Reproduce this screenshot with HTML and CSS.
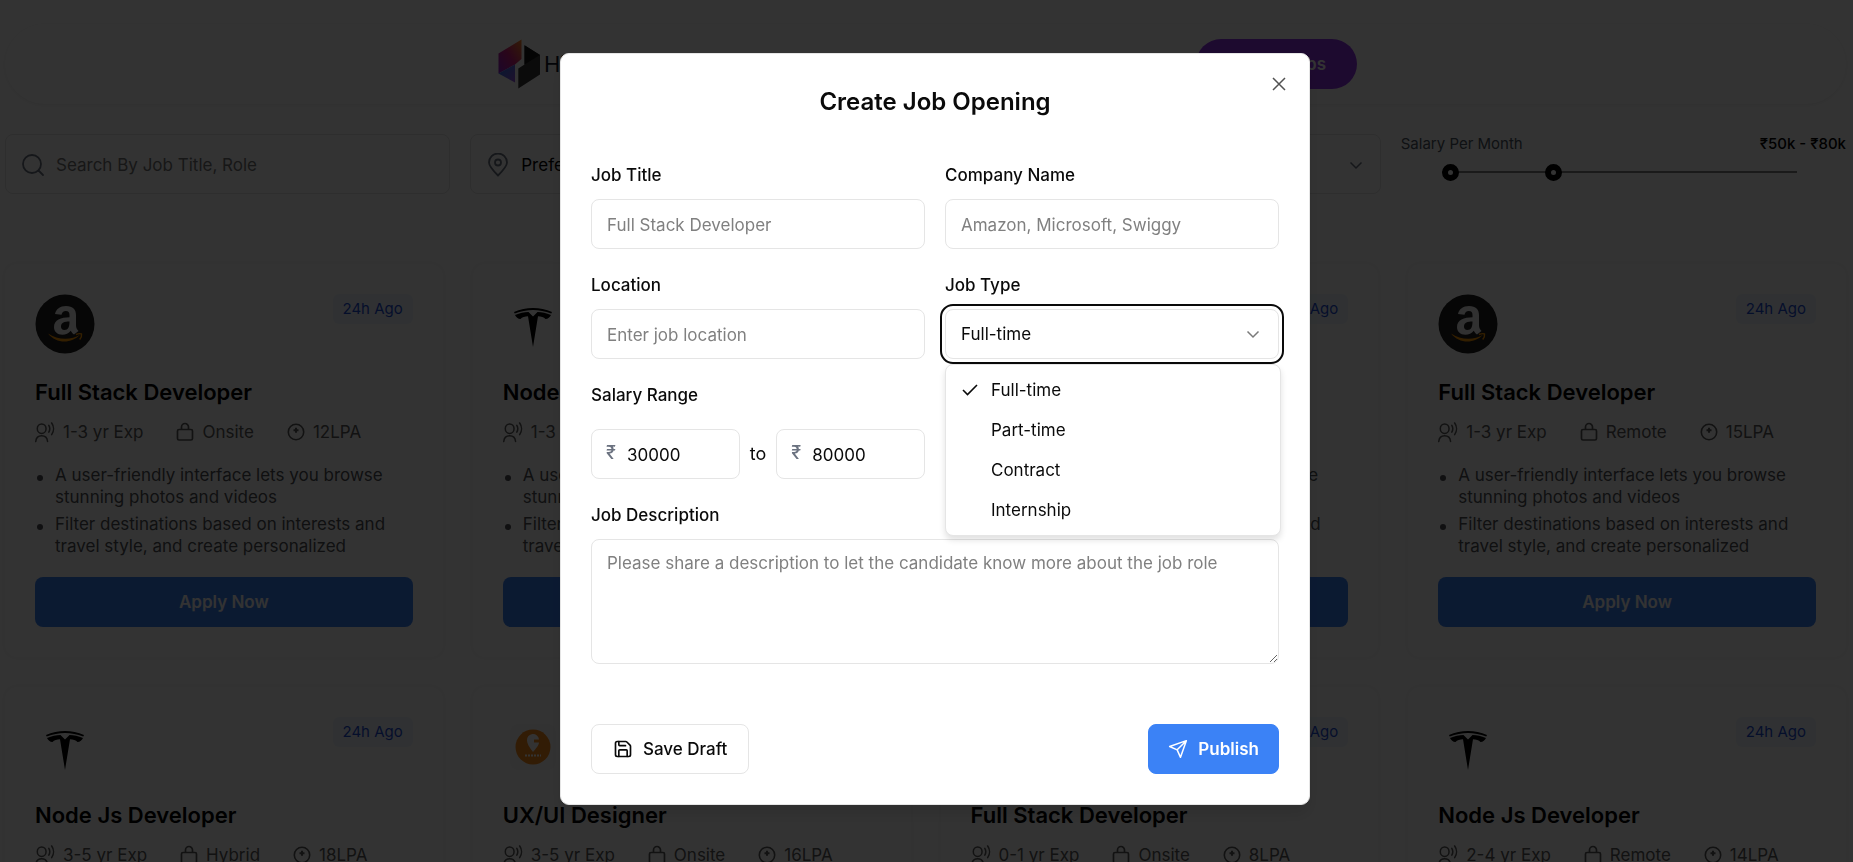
FILE: index.html
```html
<!DOCTYPE html>
<html lang="en">
<head>
<meta charset="utf-8">
<title>Job Openings</title>
<link rel="stylesheet" href="styles.css">
</head>
<body>
<svg class="sprite" aria-hidden="true">
  <symbol id="i-exp" viewBox="0 0 21 22"><g fill="none" stroke="currentColor" stroke-width="1.6" stroke-linecap="round"><ellipse cx="7" cy="7.500" rx="4.600" ry="5"/><path d="M.8 21c.4-4 3-6 6.200-6s5.800 2 6.200 6M14.500 4c1.200 2 1.200 5 0 7.200M17.500 1.500c2.600 3.600 2.600 8.600 0 12.200"/></g></symbol>
  <symbol id="i-lock" viewBox="0 0 18 20"><g fill="none" stroke="currentColor" stroke-width="1.700" stroke-linejoin="round"><rect x="1.500" y="7.500" width="15" height="10.500" rx="1.500"/><path d="M5.500 7.500V5a3.500 3.500 0 0 1 7 0v2.500"/></g></symbol>
  <symbol id="i-pay" viewBox="0 0 18 18"><g fill="none" stroke="currentColor" stroke-width="1.600"><circle cx="9" cy="9" r="7.700"/><path d="M9 4.800v5M6.500 7.200h5" stroke-width="2"/></g></symbol>
  <symbol id="i-down" viewBox="0 0 18 18"><path d="m3.500 6.500 5.500 5.500 5.500-5.500" fill="none" stroke="currentColor" stroke-width="1.500"/></symbol>
  <symbol id="i-amazon" viewBox="0 0 60 60"><circle cx="30" cy="30" r="29.500" fill="#1e1e1e"/><path d="M20 20c1-5 5-8 11-8 7 0 10 3.500 10 9v10c0 3 1 4 2.500 6L39 40.500c-1.500-1-2.500-2.300-3.200-3.700-2.300 2.600-4.800 4-8.500 4-5 0-8.300-3-8.300-7.700 0-7.600 7-9.600 15.500-9.900V21c0-2.700-1-4-3.700-4-2.500 0-3.800 1.500-4.300 3.700zM34.500 27.500c-5 0-8.500 1.200-8.500 5 0 2.200 1.200 3.500 3.300 3.500 4 0 5.200-3.500 5.200-8.500z" fill="#f2f2f2"/><path d="M13 39.500c9.500 6.600 23 7 32 1.300-8.500 9-23.500 9.500-32-1.300z" fill="#f90"/><path d="M41 40.500c2-.8 4.500-1 5.500-.5.300 1.500-.4 3.700-1.800 5.500" fill="none" stroke="#f90" stroke-width="1.500"/></symbol>
  <symbol id="i-tesla" viewBox="0 0 60 60"><path d="M11 18c12-5.500 26-5.500 38 0l-.7 1.600c-12-4.700-24.600-4.700-36.600 0zM12 21c5-2 9-3 13.500-3l4.500 4.500 4.500-4.500c4.500 0 8.500 1 13.500 3-1 2-3 4-5.500 4-1.500-2-4.500-2.800-7.500-2.800L30 53l-5-30.800c-3 0-6 .8-7.500 2.800-2.500 0-4.500-2-5.500-4z" fill="#000"/></symbol>
  <symbol id="i-swiggy" viewBox="0 0 60 60"><rect x="7" y="7" width="46" height="46" rx="8" fill="#fafafa"/><circle cx="30" cy="30" r="17.500" fill="#f98a1a"/><path d="M30 35c-4-5-6-8.500-6-11.500a6 6 0 0 1 12-1h-5v3h5c0 2.500-3 6-6 9.500z" fill="#fff"/><path d="M22 38.500h16" stroke="#fff" stroke-width="2" stroke-dasharray="2 1"/></symbol>
</svg>

<div class="page">
  <header class="topbar">
    <a class="brand" href="#">
      <svg width="44" height="50" viewBox="0 0 44 50" aria-hidden="true">
        <defs>
          <linearGradient id="g1" x1="0" y1="1" x2="1" y2="0"><stop offset="0" stop-color="#8a1fd0"/><stop offset=".5" stop-color="#d01f80"/><stop offset="1" stop-color="#ff8a1f"/></linearGradient>
          <linearGradient id="g2" x1="0" y1="0" x2="1" y2="1"><stop offset="0" stop-color="#1f80f0"/><stop offset="1" stop-color="#9a50e0"/></linearGradient>
        </defs>
        <path d="M1.500 14.500 24.500.5V20L18 25.500 1.500 34.500z" fill="url(#g1)"/>
        <path d="m1.500 34.500 16.500-9v18z" fill="url(#g2)"/>
        <path d="M27.500 6.300 43 16v19.500L21.300 49.500v-20l6.200-4z" fill="#3a3a3a"/>
        <path d="M27.500 6.300 43 16l-15.500 9.500z" fill="#161616"/>
      </svg>
      <span>HireHub</span>
    </a>
    <button class="create-btn" type="button">Create Jobs</button>
  </header>

  <section class="filters" aria-label="Filters">
    <label class="filter">
      <svg width="24" height="24" viewBox="0 0 24 24" fill="none" stroke="currentColor" stroke-width="1.800" stroke-linecap="round" aria-hidden="true"><circle cx="11" cy="11" r="9"/><path d="m17.500 17.500 4.500 4.500"/></svg>
      <input type="text" placeholder="Search By Job Title, Role" aria-label="Search By Job Title, Role">
    </label>
    <label class="filter">
      <svg width="24" height="24" viewBox="0 0 24 24" fill="none" stroke="currentColor" stroke-width="1.800" aria-hidden="true"><path d="M12 22.500C6 16.500 3 13 3 9.500a9 9 0 0 1 18 0c0 3.500-3 7-9 13z"/><circle cx="12" cy="9.500" r="3"/></svg>
      <select aria-label="Preferred Location"><option>Preferred Location</option></select>
      <svg width="18" height="18" aria-hidden="true"><use href="#i-down"/></svg>
    </label>
    <label class="filter">
      <svg width="24" height="24" viewBox="0 0 18 20" aria-hidden="true"><use href="#i-exp"/></svg>
      <select aria-label="Job type"><option>Job type</option></select>
      <svg width="18" height="18" aria-hidden="true"><use href="#i-down"/></svg>
    </label>
    <div class="salary">
      <div class="salary-head"><span>Salary Per Month</span><strong>₹50k - ₹80k</strong></div>
      <div class="slider">
        <input type="range" min="50" max="148" value="50" aria-label="Minimum salary">
        <input type="range" min="50" max="148" value="80" aria-label="Maximum salary">
      </div>
    </div>
  </section>

  <main class="jobs" id="jobs"></main>
</div>

<div class="overlay">
  <form class="modal" role="dialog" aria-labelledby="modal-title">
    <button class="close" type="button" aria-label="Close"><svg width="18" height="18" viewBox="0 0 18 18" aria-hidden="true"><path d="m3 3 12 12M15 3 3 15" stroke="currentColor" stroke-width="1.500"/></svg></button>
    <h2 id="modal-title">Create Job Opening</h2>
    <div class="fields">
      <div class="field"><label for="title">Job Title</label><input id="title" type="text" placeholder="Full Stack Developer"></div>
      <div class="field"><label for="company">Company Name</label><input id="company" type="text" placeholder="Amazon, Microsoft, Swiggy"></div>
      <div class="field"><label for="location">Location</label><input id="location" type="text" placeholder="Enter job location"></div>
      <div class="field">
        <label for="type">Job Type</label>
        <div class="picker">
          <select id="type"><option>Full-time</option><option>Part-time</option><option>Contract</option><option>Internship</option></select>
          <svg class="picker-arrow" width="18" height="18" aria-hidden="true"><use href="#i-down"/></svg>
          <ul class="menu" role="listbox" aria-label="Job Type">
            <li role="option" aria-selected="true"><svg width="18" height="18" viewBox="0 0 18 18" aria-hidden="true"><path d="m2 9 4.500 4.500L16 4" fill="none" stroke="currentColor" stroke-width="1.600"/></svg>Full-time</li>
            <li role="option">Part-time</li>
            <li role="option">Contract</li>
            <li role="option">Internship</li>
          </ul>
        </div>
      </div>
      <div class="field">
        <label for="min">Salary Range</label>
        <div class="range">
          <div class="money"><span>₹</span><input id="min" type="text" value="30000"></div>
          <span class="to">to</span>
          <div class="money"><span>₹</span><input type="text" value="80000" aria-label="Maximum salary"></div>
        </div>
      </div>
      <div class="field wide"><label for="desc">Job Description</label><textarea id="desc" placeholder="Please share a description to let the candidate know more about the job role"></textarea></div>
    </div>
    <div class="actions">
      <button class="btn" type="button"><svg width="20" height="20" viewBox="0 0 24 24" fill="none" stroke="currentColor" stroke-width="2" stroke-linecap="round" stroke-linejoin="round" aria-hidden="true"><path d="M15.200 3a2 2 0 0 1 1.400.6l3.800 3.800a2 2 0 0 1 .6 1.400V19a2 2 0 0 1-2 2H5a2 2 0 0 1-2-2V5a2 2 0 0 1 2-2z"/><path d="M17 21v-7a1 1 0 0 0-1-1H8a1 1 0 0 0-1 1v7M7 3v4a1 1 0 0 0 1 1h7"/></svg>Save Draft</button>
      <button class="btn primary" type="submit"><svg width="20" height="20" viewBox="0 0 24 24" fill="none" stroke="currentColor" stroke-width="1.800" stroke-linejoin="round" aria-hidden="true"><path d="M22 2 2 9l9 4 4 9zM22 2 11 13"/></svg>Publish</button>
    </div>
  </form>
</div>
<script src="jobs.js"></script>
</body>
</html>
```
FILE: styles.css
```css
* { box-sizing: border-box; }

body {
  margin: 0;
  height: 100vh;
  overflow: hidden;
  background: #fff;
  color: #0a0a0a;
  font: 17px/22px Inter, "Liberation Sans", sans-serif;
}

button, input, select, textarea { font: inherit; color: inherit; }
h2, h3, ul { margin: 0; padding: 0; }
ul { list-style: none; }
svg { flex: none; }
.sprite { position: absolute; width: 0; height: 0; }

.page { padding: 24px 7px 0 5px; }

.topbar {
  display: flex;
  align-items: center;
  justify-content: space-between;
  height: 80px;
  padding: 0 489px 0 492px;
  border-radius: 40px;
  box-shadow: 0 1px 4px rgba(0, 0, 0, 0.08);
}
.brand {
  display: flex;
  align-items: center;
  gap: 3px;
  color: #0f172a;
  font-size: 22px;
  text-decoration: none;
}
.create-btn {
  height: 50px;
  padding: 0 31px;
  border: 0;
  border-radius: 25px;
  background: #9333ea;
  color: #fff;
  font-weight: 600;
}

.filters {
  display: grid;
  grid-template-columns: repeat(4, 1fr);
  gap: 20px;
  margin-top: 30px;
}
.filter {
  display: flex;
  align-items: center;
  gap: 11px;
  height: 60px;
  padding: 1px 15px 0;
  border: 1px solid #e5e5e5;
  border-radius: 8px;
  color: #6b7280;
}
.filter input, .filter select {
  flex: 1;
  min-width: 0;
  padding: 0;
  border: 0;
  outline: 0;
  background: none;
  appearance: none;
}
.filter select { color: #000; }
.filter input::placeholder { color: #757575; }

.salary-head {
  display: flex;
  justify-content: space-between;
  font-size: 15px;
  line-height: 20px;
  color: #4b5563;
}
.salary-head strong { color: #000; font-weight: 500; }
.slider {
  position: relative;
  height: 2px;
  margin: 17px 49px 0 41px;
  background: #808080;
}
.slider input {
  position: absolute;
  left: 0;
  top: -8px;
  width: 100%;
  height: 18px;
  margin: 0;
  appearance: none;
  background: none;
  pointer-events: none;
}
.slider input::-webkit-slider-thumb {
  appearance: none;
  width: 17px;
  height: 17px;
  border: 6px solid #000;
  border-radius: 50%;
  background: #fff;
  pointer-events: auto;
}

.jobs {
  display: grid;
  grid-template-columns: repeat(4, 1fr);
  gap: 30px;
  margin-top: 70px;
}
.job {
  padding: 30px;
  border-radius: 12px;
  box-shadow: 0 0 6px rgba(0, 0, 0, 0.08);
}
.job-head {
  display: flex;
  align-items: flex-start;
  justify-content: space-between;
}
.tag {
  padding: 5px 10px;
  border-radius: 6px;
  background: #eff6ff;
  color: #1d4ed8;
  font-size: 15px;
  line-height: 20px;
}
.job h3 {
  margin-top: 24px;
  color: #000;
  font-size: 22px;
  font-weight: 600;
  line-height: 28px;
}
.meta {
  display: flex;
  gap: 33px;
  margin-top: 15px;
  color: #5a5a5a;
}
.meta li { display: flex; align-items: center; gap: 8px; }
.points {
  display: grid;
  gap: 5px;
  margin-top: 21px;
  padding-left: 20px;
  color: #505357;
}
.points li { position: relative; }
.points li::before {
  content: "";
  position: absolute;
  left: -18px;
  top: 11px;
  width: 6px;
  height: 6px;
  border-radius: 50%;
  background: currentColor;
}
.apply {
  width: 100%;
  height: 50px;
  margin-top: 20px;
  border: 0;
  border-radius: 8px;
  background: #3b82f6;
  color: #fff;
  font-weight: 600;
}

.overlay {
  position: fixed;
  inset: 0;
  display: flex;
  align-items: center;
  justify-content: center;
  padding: 0 0 4px 17px;
  background: rgba(0, 0, 0, 0.8);
}
.modal {
  position: relative;
  width: 750px;
  padding: 30px;
  border: 1px solid #e5e5e5;
  border-radius: 9px;
  background: #fff;
  box-shadow: 0 10px 15px rgba(0, 0, 0, 0.1);
}
.modal h2 {
  font-size: 24px;
  font-weight: 600;
  line-height: 35px;
  text-align: center;
}
.close {
  position: absolute;
  top: 21px;
  right: 21px;
  display: flex;
  padding: 0;
  border: 0;
  background: none;
  color: #525252;
}
.fields {
  display: grid;
  grid-template-columns: 1fr 1fr;
  gap: 25px 20px;
  margin-top: 45px;
}
.field > label {
  display: block;
  margin-bottom: 13px;
  font-weight: 500;
}
.wide { grid-column: 1 / -1; }
.field input, .field select, .field textarea {
  display: block;
  width: 100%;
  height: 50px;
  padding: 0 15px;
  border: 1px solid #e5e5e5;
  border-radius: 8px;
  background: #fff;
  appearance: none;
}
.field input { padding-top: 1px; }
.field textarea { height: 125px; padding: 12px 15px; resize: vertical; }
.field ::placeholder { color: #808080; }

.picker { position: relative; }
.field .picker select { outline: 2px solid #0a0a0a; outline-offset: 3px; }
.picker-arrow {
  position: absolute;
  right: 17px;
  top: 16px;
  color: #7a7a7a;
}
.menu {
  position: absolute;
  z-index: 1;
  left: 0;
  top: 55px;
  width: 336px;
  padding: 5px;
  border: 1px solid #e5e5e5;
  border-radius: 8px;
  background: #fff;
  box-shadow: 0 4px 6px rgba(0, 0, 0, 0.12);
}
.menu li {
  display: flex;
  align-items: center;
  gap: 12px;
  height: 40px;
  padding-left: 40px;
}
.menu li[aria-selected] { padding-left: 10px; }

.range {
  display: grid;
  grid-template-columns: 1fr auto 1fr;
  align-items: center;
  gap: 10px;
  margin-top: 23px;
}
.to { font-size: 18px; }
.money { position: relative; }
.money span {
  position: absolute;
  left: 15px;
  top: 13px;
  color: #6b7280;
  font-size: 18px;
  font-weight: 500;
}
.money input { padding-left: 35px; }

.actions {
  display: flex;
  justify-content: space-between;
  margin-top: 60px;
}
.btn {
  display: flex;
  align-items: center;
  gap: 10px;
  height: 50px;
  padding: 0 21px;
  border: 1px solid #e5e5e5;
  border-radius: 8px;
  background: #fff;
  font-weight: 500;
}
.primary {
  padding: 0 19px;
  border-color: #3b82f6;
  background: #3b82f6;
  color: #fff;
  font-weight: 600;
}
```
FILE: jobs.js
```js
const jobs = [
  ["amazon", "Full Stack Developer", "1-3 yr Exp", "Onsite", "12LPA"],
  ["tesla", "Node Js Developer", "1-3 yr Exp", "Onsite", "12LPA"],
  ["swiggy", "UX/UI Designer", "1-3 yr Exp", "Onsite", "12LPA"],
  ["amazon", "Full Stack Developer", "1-3 yr Exp", "Remote", "15LPA"],
  ["tesla", "Node Js Developer", "3-5 yr Exp", "Hybrid", "18LPA"],
  ["swiggy", "UX/UI Designer", "3-5 yr Exp", "Onsite", "16LPA"],
  ["amazon", "Full Stack Developer", "0-1 yr Exp", "Onsite", "8LPA"],
  ["tesla", "Node Js Developer", "2-4 yr Exp", "Remote", "14LPA"],
];
const icon = (id, w, h) => `<svg width="${w}" height="${h}" aria-hidden="true"><use href="#i-${id}"/></svg>`;
document.getElementById("jobs").innerHTML = jobs.map(([logo, title, exp, mode, pay]) => `
  <article class="job">
    <div class="job-head">${icon(logo, 60, 60)}<span class="tag">24h Ago</span></div>
    <h3>${title}</h3>
    <ul class="meta">
      <li>${icon("exp", 20, 22)}${exp}</li>
      <li>${icon("lock", 18, 20)}${mode}</li>
      <li>${icon("pay", 18, 18)}${pay}</li>
    </ul>
    <ul class="points">
      <li>A user-friendly interface lets you browse stunning photos and videos</li>
      <li>Filter destinations based on interests and travel style, and create personalized</li>
    </ul>
    <button class="apply" type="button">Apply Now</button>
  </article>`).join("");
```
